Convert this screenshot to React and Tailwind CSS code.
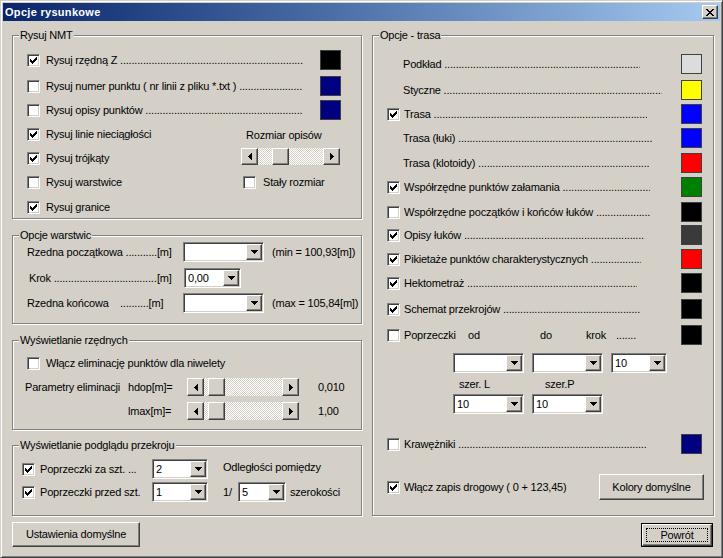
import React from 'react';

const DOTS = '.'.repeat(140);

const CHECK = ['......X', '.....XX', 'X...XXX', 'XX.XXX.', 'XXXXX..', '.XXX...', '..X....'];
const DOWN = ['XXXXXXX', '.XXXXX.', '..XXX..', '...X...'];
const LEFT = ['...X', '..XX', '.XXX', 'XXXX', '.XXX', '..XX', '...X'];
const RIGHT = ['X...', 'XX..', 'XXX.', 'XXXX', 'XXX.', 'XX..', 'X...'];
const CLOSE = ['XX....XX', '.XX..XX.', '..XXXX..', '...XX...', '..XXXX..', '.XX..XX.', 'XX....XX'];

const RAISED =
  'bg-[#d4d0c8] border border-t-white border-l-white border-r-[#404040] border-b-[#404040] shadow-[inset_-1px_-1px_0_#808080]';
const SUNKEN =
  'border border-t-[#808080] border-l-[#808080] border-r-white border-b-white shadow-[inset_1px_1px_0_#404040,inset_-1px_-1px_0_#d4d0c8]';

function Pix({ rows, color = '#000' }) {
  const w = rows[0].length;
  const h = rows.length;
  return (
    <svg width={w} height={h} viewBox={`0 0 ${w} ${h}`} shapeRendering="crispEdges" className="block">
      {rows.flatMap((r, y) =>
        [...r].map((c, x) =>
          c === 'X' ? <rect key={`${x}-${y}`} x={x} y={y} width="1" height="1" fill={color} /> : null
        )
      )}
    </svg>
  );
}

function Check({ on }) {
  return (
    <span className={`w-[13px] h-[13px] shrink-0 bg-white flex items-center justify-center ${SUNKEN}`}>
      {on && <Pix rows={CHECK} />}
    </span>
  );
}

function Combo({ w, value }) {
  return (
    <div className={`${w} h-[20px] shrink-0 bg-white flex p-[1px] ${SUNKEN}`}>
      <span className="flex-1 pl-[2px] leading-[16px]">{value}</span>
      <span className={`w-[16px] flex items-center justify-center ${RAISED}`}>
        <Pix rows={DOWN} />
      </span>
    </div>
  );
}

function HScroll({ w, h, thumb }) {
  return (
    <div className={`${w} ${h} shrink-0 flex`}>
      <span className={`w-[17px] shrink-0 flex items-center justify-center ${RAISED}`}>
        <Pix rows={LEFT} />
      </span>
      <div className="flex-1 flex bg-[repeating-conic-gradient(#fff_0%_25%,#d4d0c8_0%_50%)] bg-size-[2px_2px]">
        <span className={`${thumb} w-[17px] ${RAISED}`} />
      </div>
      <span className={`w-[17px] shrink-0 flex items-center justify-center ${RAISED}`}>
        <Pix rows={RIGHT} />
      </span>
    </div>
  );
}

function Swatch({ c }) {
  return <span className={`block w-[21px] h-[20px] shrink-0 border border-[#404040] ${c}`} />;
}

function Leader({ w, text }) {
  return (
    <span className={`${w} shrink-0 overflow-hidden whitespace-nowrap`}>
      {text} {DOTS}
    </span>
  );
}

function Group({ title, className, children }) {
  return (
    <div className={`relative border border-[#808080] shadow-[1px_1px_0_#fff,inset_1px_1px_0_#fff] ${className}`}>
      <span className="absolute left-[6px] top-[-7px] px-[1px] bg-[#d4d0c8] whitespace-nowrap">{title}</span>
      {children}
    </div>
  );
}

const TRASA = [
  { label: 'Podkład', check: null, w: 'w-[237px]', c: 'bg-[#dcdcdc]', mt: 'mt-0' },
  { label: 'Styczne', check: null, w: 'w-[259px]', c: 'bg-[#ffff00]', mt: 'mt-[6px]' },
  { label: 'Trasa', check: true, w: 'w-[243px]', c: 'bg-[#0000ff]', mt: 'mt-[4px]' },
  { label: 'Trasa (łuki)', check: null, w: 'w-[249px]', c: 'bg-[#0000ff]', mt: 'mt-[4px]' },
  { label: 'Trasa (klotoidy)', check: null, w: 'w-[246px]', c: 'bg-[#ff0000]', mt: 'mt-[5px]' },
  { label: 'Współrzędne punktów załamania', check: true, w: 'w-[246px]', c: 'bg-[#008000]', mt: 'mt-[4px]' },
  { label: 'Współrzędne początków i końców łuków', check: false, w: 'w-[246px]', c: 'bg-[#000000]', mt: 'mt-[5px]' },
  { label: 'Opisy łuków', check: true, w: 'w-[241px]', c: 'bg-[#3a3a3a]', mt: 'mt-[3px]' },
  { label: 'Pikietaże punktów charakterystycznych', check: true, w: 'w-[237px]', c: 'bg-[#ff0000]', mt: 'mt-[4px]' },
  { label: 'Hektometraż', check: true, w: 'w-[233px]', c: 'bg-[#000000]', mt: 'mt-[4px]' },
  { label: 'Schemat przekrojów', check: true, w: 'w-[236px]', c: 'bg-[#000000]', mt: 'mt-[6px]' },
];

function TrasaRow({ label, check, w, c, mt }) {
  return (
    <div className={`h-[20px] flex items-center ${mt}`}>
      {check === null ? (
        <span className="w-[16px] shrink-0" />
      ) : (
        <>
          <Check on={check} />
          <span className="w-[4px] shrink-0" />
        </>
      )}
      <Leader w={w} text={label} />
      <span className="ml-auto">
        <Swatch c={c} />
      </span>
    </div>
  );
}

function NmtRow({ on, text, children, mt = '' }) {
  return (
    <div className={`h-[24px] flex items-center ${mt}`}>
      <Check on={on} />
      <span className="ml-[6px] flex-1 flex items-center">{text}</span>
      {children}
    </div>
  );
}

export default function App() {
  return (
    <div className="w-[723px] h-[558px] overflow-hidden bg-[#d4d0c8] border border-t-[#d4d0c8] border-l-[#d4d0c8] border-r-[#404040] border-b-[#404040] shadow-[inset_1px_1px_0_#fff,inset_-1px_-1px_0_#808080] p-[2px] flex flex-col font-['Liberation_Sans',Arial,sans-serif] text-[11px] leading-[13px] tracking-[-0.2px] text-black">
      <div className="h-[18px] shrink-0 flex items-center bg-linear-to-r from-[#0a246a] to-[#a6caf0] pl-[2px] pr-[2px]">
        <span className="text-white font-bold tracking-[0.3px]">Opcje rysunkowe</span>
        <span className={`ml-auto w-[16px] h-[14px] flex items-center justify-center ${RAISED}`}>
          <Pix rows={CLOSE} />
        </span>
      </div>

      <div className="flex pl-[9px] pt-[14px]">
        {/* left column */}
        <div className="w-[350px] flex flex-col">
          <Group title="Rysuj NMT" className="h-[184px] pt-[12px] pl-[14px] pr-[20px]">
            <NmtRow on text={<Leader w="w-[257px]" text="Rysuj rzędną Z" />}>
              <Swatch c="bg-black" />
            </NmtRow>
            <NmtRow on={false} mt="mt-[2px]" text={<Leader w="w-[257px]" text="Rysuj numer punktu ( nr linii z pliku *.txt )" />}>
              <Swatch c="bg-[#000080]" />
            </NmtRow>
            <NmtRow on={false} text={<Leader w="w-[257px]" text="Rysuj opisy punktów " />}>
              <Swatch c="bg-[#000080]" />
            </NmtRow>
            <div className="flex">
              <div className="w-[214px] flex flex-col">
                <NmtRow on text="Rysuj linie nieciągłości" />
                <NmtRow on text="Rysuj trójkąty" />
                <NmtRow on={false} text="Rysuj warstwice" />
                <NmtRow on mt="mt-[1px]" text="Rysuj granice" />
              </div>
              <div className="flex flex-col">
                <span className="mt-[7px] pl-[5px]">Rozmiar opisów</span>
                <div className="mt-[6px]">
                  <HScroll w="w-[99px]" h="h-[17px]" thumb="ml-[14px]" />
                </div>
                <div className="mt-[11px] pl-[2px] flex items-center">
                  <Check on={false} />
                  <span className="ml-[7px]">Stały rozmiar</span>
                </div>
              </div>
            </div>
          </Group>

          <Group title="Opcje warstwic" className="mt-[16px] h-[89px] pt-[6px] pl-[14px] whitespace-nowrap">
            <div className="h-[20px] flex items-center">
              <span className="w-[146px] flex">
                <Leader w="w-[130px]" text="Rzedna początkowa" />
                <span>[m]</span>
              </span>
              <span className="ml-[10px]">
                <Combo w="w-[81px]" value="" />
              </span>
              <span className="ml-[8px]">(min = 100,93[m])</span>
            </div>
            <div className="h-[20px] mt-[6px] flex items-center">
              <span className="w-[146px] flex pl-[2px]">
                <Leader w="w-[128px]" text="Krok" />
                <span>[m]</span>
              </span>
              <span className="ml-[11px]">
                <Combo w="w-[57px]" value="0,00" />
              </span>
            </div>
            <div className="h-[20px] mt-[5px] flex items-center">
              <span className="w-[146px] flex">
                <span>Rzedna końcowa&nbsp;&nbsp;&nbsp;&nbsp;..........[m]</span>
              </span>
              <span className="ml-[10px]">
                <Combo w="w-[81px]" value="" />
              </span>
              <span className="ml-[8px]">(max = 105,84[m])</span>
            </div>
          </Group>

          <Group title="Wyświetlanie rzędnych" className="mt-[16px] h-[90px] pt-[15px] pl-[14px] whitespace-nowrap">
            <div className="h-[14px] flex items-center">
              <Check on={false} />
              <span className="ml-[6px]">Włącz eliminację punktów dla niwelety</span>
            </div>
            <div className="mt-[8px] -ml-[2px] flex items-center">
              <span className="w-[103px]">Parametry eliminacji</span>
              <span className="w-[59px]">hdop[m]=</span>
              <HScroll w="w-[112px]" h="h-[18px]" thumb="ml-[4px]" />
              <span className="ml-[19px]">0,010</span>
            </div>
            <div className="mt-[6px] -ml-[2px] flex items-center">
              <span className="w-[103px]" />
              <span className="w-[59px]">lmax[m]=</span>
              <HScroll w="w-[112px]" h="h-[18px]" thumb="ml-[4px]" />
              <span className="ml-[19px]">1,00</span>
            </div>
          </Group>

          <Group title="Wyświetlanie podglądu przekroju" className="mt-[15px] h-[71px] pt-[13px] pl-[9px] flex whitespace-nowrap">
            <div className="flex flex-col">
              <div className="h-[20px] flex items-center">
                <Check on />
                <span className="w-[112px] ml-[5px]">Poprzeczki za szt. ...</span>
                <Combo w="w-[56px]" value="2" />
              </div>
              <div className="h-[20px] mt-[3px] flex items-center">
                <Check on />
                <span className="w-[112px] ml-[5px]">Poprzeczki przed szt.</span>
                <Combo w="w-[56px]" value="1" />
              </div>
            </div>
            <div className="ml-[15px] flex flex-col">
              <span className="h-[20px] leading-[16px]">Odległości pomiędzy</span>
              <div className="h-[20px] mt-[3px] flex items-center">
                <span className="w-[15px]">1/</span>
                <Combo w="w-[48px]" value="5" />
                <span className="ml-[4px]">szerokości</span>
              </div>
            </div>
          </Group>

          <div className="mt-[6px]">
            <button className={`w-[128px] h-[25px] flex items-center justify-center ${RAISED}`}>
              Ustawienia domyślne
            </button>
          </div>
        </div>

        {/* right column */}
        <div className="ml-[10px] w-[342px] flex flex-col">
          <Group title="Opcje - trasa" className="h-[481px] pt-[18px] pl-[14px] pr-[11px] whitespace-nowrap">
            {TRASA.map((r) => (
              <TrasaRow key={r.label} {...r} />
            ))}

            <div className="h-[20px] mt-[6px] flex items-center">
              <Check on={false} />
              <span className="ml-[4px] w-[64px]">Poprzeczki</span>
              <span className="w-[72px]">od</span>
              <span className="w-[46px]">do</span>
              <span className="w-[30px]">krok</span>
              <span>.......</span>
              <span className="ml-auto">
                <Swatch c="bg-black" />
              </span>
            </div>
            <div className="mt-[8px] ml-[66px] flex">
              <Combo w="w-[71px]" value="" />
              <span className="ml-[8px]">
                <Combo w="w-[71px]" value="" />
              </span>
              <span className="ml-[8px]">
                <Combo w="w-[56px]" value="10" />
              </span>
            </div>
            <div className="mt-[5px] ml-[72px] flex">
              <span className="w-[86px]">szer. L</span>
              <span>szer.P</span>
            </div>
            <div className="mt-[3px] ml-[66px] flex">
              <Combo w="w-[71px]" value="10" />
              <span className="ml-[8px]">
                <Combo w="w-[71px]" value="10" />
              </span>
            </div>

            <div className="h-[20px] mt-[20px] flex items-center">
              <Check on={false} />
              <span className="w-[4px] shrink-0" />
              <Leader w="w-[242px]" text="Krawężniki" />
              <span className="ml-auto">
                <Swatch c="bg-[#000080]" />
              </span>
            </div>

            <div className="h-[26px] mt-[20px] flex items-center">
              <Check on />
              <span className="ml-[4px]">Włącz zapis drogowy ( 0 + 123,45)</span>
              <button className={`ml-auto -mr-[2px] w-[105px] h-[26px] flex items-center justify-center ${RAISED}`}>
                Kolory domyślne
              </button>
            </div>
          </Group>

          <div className="mt-[7px] flex justify-end">
            <button className="mr-[1px] w-[72px] h-[24px] border border-black flex">
              <span className={`flex-1 flex p-[3px] ${RAISED}`}>
                <span className="flex-1 border border-dotted border-black flex items-center justify-center">
                  Powrót
                </span>
              </span>
            </button>
          </div>
        </div>
      </div>
    </div>
  );
}
